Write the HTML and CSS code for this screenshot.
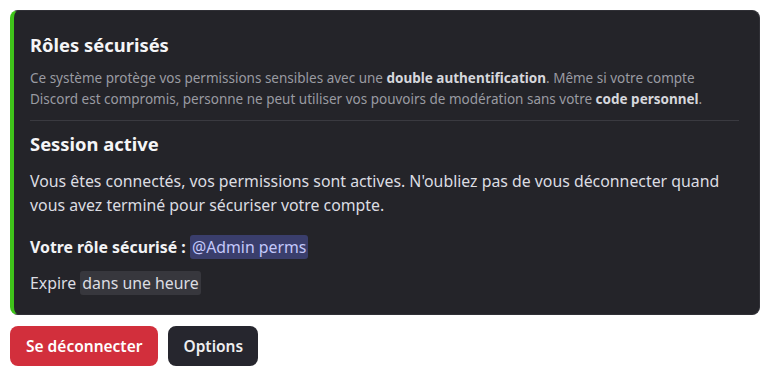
FILE: index.html
```html
<!DOCTYPE html>
<html lang="fr">
<head>
<meta charset="utf-8">
<link rel="stylesheet" href="styles.css">
</head>
<body>
<div class="card">
  <h3 class="title">Rôles sécurisés</h3>
  <p class="subtext">Ce système protège vos permissions sensibles avec une <strong>double authentification</strong>. Même si votre compte Discord est compromis, personne ne peut utiliser vos pouvoirs de modération sans votre <strong>code personnel</strong>.</p>
  <div class="separator"></div>
  <h3 class="title title-2">Session active</h3>
  <p class="body">Vous êtes connectés, vos permissions sont actives. N'oubliez pas de vous déconnecter quand vous avez terminé pour sécuriser votre compte.</p>
  <p class="role"><strong>Votre rôle sécurisé :</strong> <span class="mention">@Admin perms</span></p>
  <p class="expire">Expire <span class="timestamp">dans une heure</span></p>
</div>
<div class="actions">
  <button class="btn btn-danger">Se déconnecter</button>
  <button class="btn btn-secondary">Options</button>
</div>
</body>
</html>
```
FILE: styles.css
```css
html, body {
  margin: 0;
  padding: 0;
  background: #ffffff;
}
body {
  padding: 10px;
  font-family: "Noto Sans", "Open Sans", sans-serif;
}
.card {
  width: 750px;
  box-sizing: border-box;
  background: #242429;
  border: 1px solid #303036;
  border-left: 4px solid #3fc31a;
  border-radius: 8px;
  padding: 22px 20px 19px 16px;
  display: flex;
  flex-direction: column;
  color: #dbdee1;
}
.title {
  margin: 0;
  font-size: 18.4px;
  line-height: 24px;
  font-weight: 700;
  color: #f5f5f7;
}
.subtext {
  margin: 11px 0 0;
  font-size: 13.5px;
  line-height: 21px;
  color: #9a9ba2;
}
.subtext strong {
  color: #d6d7dc;
  font-weight: 700;
}
.separator {
  margin-top: 10px;
  height: 1px;
  background: #3a3a40;
}
.title-2 {
  margin-top: 11px;
}
.body {
  margin: 13px 0 0;
  font-size: 15.85px;
  line-height: 24px;
  color: #dcdde2;
}
.role {
  margin: 18px 0 0;
  font-size: 15.85px;
  line-height: 24px;
  color: #dcdde2;
}
.role strong {
  font-weight: 700;
  color: #f2f3f5;
}
.mention {
  background: #3a3e6c;
  color: #c3c8fb;
  border-radius: 3px;
  padding: 1px 2px;
}
.expire {
  margin: 12px 0 0;
  font-size: 15.85px;
  line-height: 24px;
  color: #dcdde2;
}
.timestamp {
  background: #37373d;
  border-radius: 3px;
  padding: 1px 2px;
}
.actions {
  display: flex;
  gap: 10px;
  margin-top: 11px;
}
.btn {
  height: 40px;
  border: none;
  border-radius: 8px;
  padding: 0 15px;
  font-family: "Noto Sans", "Open Sans", sans-serif;
  font-size: 15.5px;
  font-weight: 600;
  color: #ffffff;
}
.btn-danger {
  background: #d22f3c;
  padding: 0 16px;
}
.btn-secondary {
  background: #26262e;
  color: #eeeef0;
}
```
